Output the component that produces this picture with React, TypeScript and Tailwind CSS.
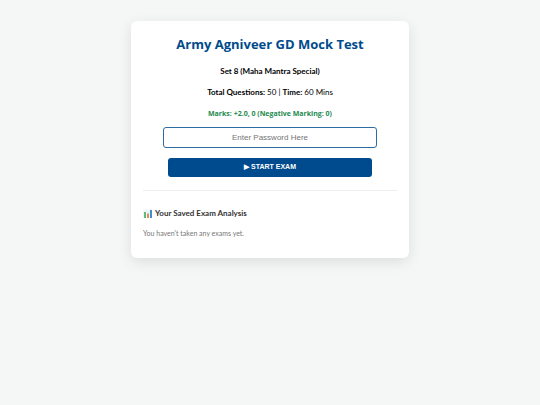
/**
 * Mock test start screen
 */
import { useState } from 'react';

function ChartIcon() {
  return (
    <svg viewBox="0 0 18 18" className="h-[9px] w-[9px] shrink-0" aria-hidden="true">
      <rect x="0" y="0" width="18" height="18" fill="#f3f7f9" />
      <path d="M0 6H18M0 12H18" stroke="#dde7eb" strokeWidth="1" />
      <rect x="2" y="6" width="4" height="12" fill="#5dbb7c" />
      <rect x="8" y="9" width="4" height="9" fill="#ec8a5a" />
      <rect x="14" y="2" width="4" height="16" fill="#3c8fd0" />
    </svg>
  );
}

function App() {
  const [password, setPassword] = useState('');

  const handleSubmit = (e: React.FormEvent) => {
    e.preventDefault();
  };

  return (
    <div className="min-h-screen bg-[#f4f7f6] px-4 pt-[21px] font-['Lato','Noto_Sans',sans-serif] text-black">
      <main className="mx-auto max-w-[278px] rounded-md bg-white px-3 pt-3 pb-[18px] text-center shadow-[0_4px_14px_rgba(0,0,0,0.1)]">
        <h1 className="font-['Open_Sans',sans-serif] text-[13px] leading-[22px] font-bold text-[#004b8d]">Army Agniveer GD Mock Test</h1>
        <h2 className="mt-[10px] text-[8px] leading-3 font-bold">Set 8 (Maha Mantra Special)</h2>
        <p className="mt-[9px] text-[8px] leading-3">
          <b>Total Questions:</b> 50 | <b>Time:</b> 60 Mins
        </p>
        <p className="mt-[10px] font-['Open_Sans',sans-serif] text-[7px] leading-3 font-bold text-[#1d8a4e]">Marks: +2.0, 0 (Negative Marking: 0)</p>

        <form onSubmit={handleSubmit} className="mt-[7px] flex flex-col items-center">
          <input
            type="password"
            aria-label="Enter Password Here"
            placeholder="Enter Password Here"
            value={password}
            onChange={(e) => setPassword(e.target.value)}
            className="h-[21px] w-[84%] rounded-[3px] border border-[#2f6ca3] text-center font-['Liberation_Sans',sans-serif] text-[8px] placeholder:text-[#757575] focus:outline-none"
          />
          <button
            type="submit"
            className="mt-[10px] h-[19px] w-4/5 rounded-[3px] bg-[#004b8d] font-['Liberation_Sans',sans-serif] text-[7px] font-bold text-white"
          >
            ▶ START EXAM
          </button>
        </form>

        <section className="mt-[13px] border-t border-[#eeeeee] pt-4 text-left">
          <h3 className="flex items-center gap-[3px] text-[8px] leading-3 font-bold text-[#333333]">
            <ChartIcon />
            Your Saved Exam Analysis
          </h3>
          <p className="mt-2 pb-px text-[7px] leading-3 text-[#777777]">You haven't taken any exams yet.</p>
        </section>
      </main>
    </div>
  );
}

export default App;
